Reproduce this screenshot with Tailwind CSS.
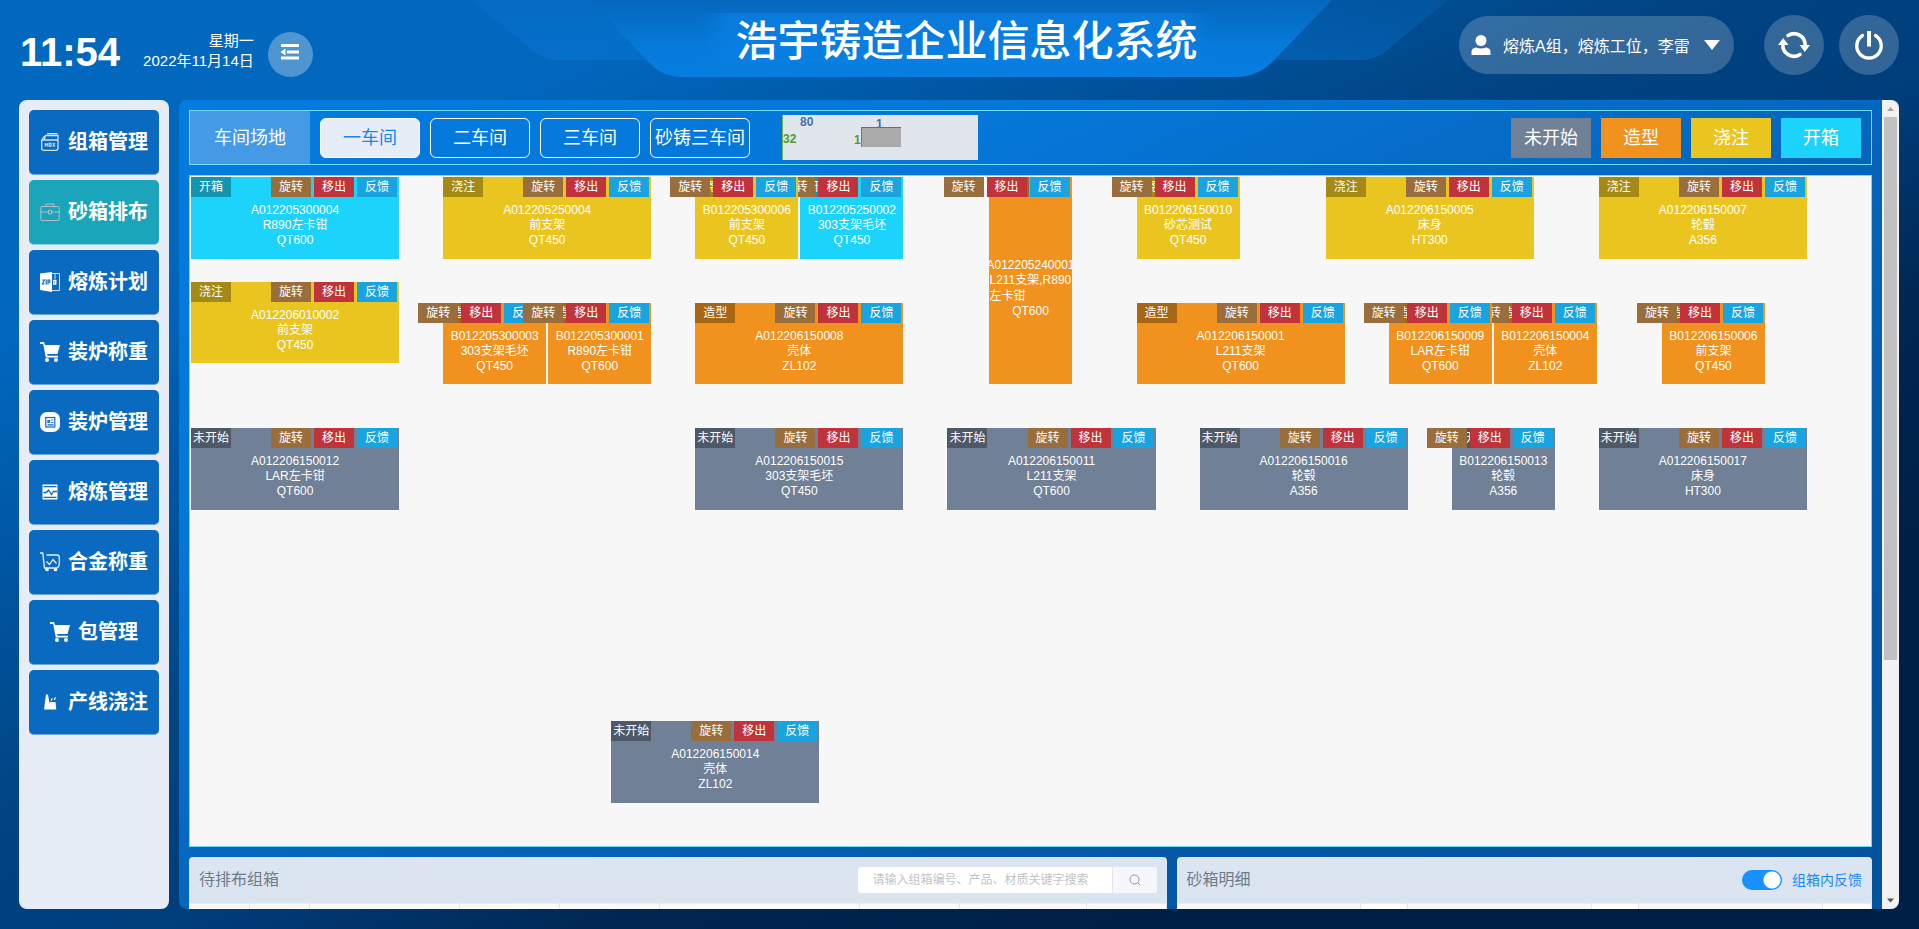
<!DOCTYPE html>
<html lang="zh-CN">
<head>
<meta charset="utf-8">
<title>浩宇铸造企业信息化系统</title>
<script src="https://cdn.jsdelivr.net/npm/@tailwindcss/browser@4"></script>
</head>
<body class="flex h-screen flex-col overflow-hidden bg-[linear-gradient(to_bottom_right,#0268be_0%,#0268be_18%,#0058a6_29%,#004483_44%,#003e7c_54%,#002652_66%,#001f46_80%,#001f46_100%)] font-['Liberation_Sans','Noto_Sans_CJK_SC',sans-serif] text-white">

<header class="relative flex h-[100px] shrink-0 items-start justify-between px-5">
  <!-- Title banner -->
  <svg class="absolute top-0 left-1/2 -translate-x-1/2" width="1000" height="80" viewBox="460 0 1000 80" aria-hidden="true">
    <defs>
      <linearGradient id="wing" x1="0" y1="0" x2="0" y2="1"><stop offset="0" stop-color="#0a7de0" stop-opacity=".15"/><stop offset="1" stop-color="#0a7de0" stop-opacity=".35"/></linearGradient>
      <linearGradient id="core" x1="0" y1="0" x2="0" y2="1"><stop offset="0" stop-color="#0567bd"/><stop offset=".6" stop-color="#067ada"/><stop offset="1" stop-color="#067ee2"/></linearGradient>
      <linearGradient id="glow" x1="0" y1="0" x2="1" y2="0"><stop offset="0" stop-color="#0a80e4" stop-opacity="0"/><stop offset=".06" stop-color="#0a80e4" stop-opacity=".7"/><stop offset=".94" stop-color="#0a80e4" stop-opacity=".7"/><stop offset="1" stop-color="#0a80e4" stop-opacity="0"/></linearGradient>
    </defs>
    <path fill="url(#wing)" d="M472 0 L528 46 Q541 60 560 60 H1360 Q1378 60 1392 46 L1448 0Z"/>
    <path fill="url(#core)" d="M590 0 L645 58 Q660 77 682 77 H1236 Q1260 77 1276 58 L1332 0Z"/>
    <rect x="700" y="13" width="512" height="50" fill="url(#glow)"/>
  </svg>
  <h1 class="absolute top-[10px] left-1/2 ml-[7px] -translate-x-1/2 text-[42px] leading-[64px] font-medium whitespace-nowrap">浩宇铸造企业信息化系统</h1>

  <div class="flex items-center pt-[30px]">
    <time class="pb-1 text-[40px] leading-[44px] font-bold">11:54</time>
    <div class="ml-[23px] pb-[6px] text-right text-[15px] leading-5 whitespace-nowrap"><div>星期一</div><div>2022年11月14日</div></div>
    <button type="button" aria-label="收起菜单" class="ml-[14px] flex size-[45px] items-center justify-center rounded-full bg-white/30">
      <svg class="mb-1 size-5" viewBox="0 0 20 20" fill="#fff"><path d="M1 2h18v3H1zM7 8.500h12v3H7zM1 14.500h18v3H1zM0.500 10l5-3.500v7z"/></svg>
    </button>
  </div>

  <div class="flex items-center pt-[15px]">
    <button type="button" class="mr-[30px] flex h-[58px] w-[275px] items-center rounded-full bg-white/20 pl-3 text-base">
      <svg class="mr-3 size-5" viewBox="0 0 20 20" fill="#fff"><circle cx="10" cy="5.500" r="5.500"/><path d="M0.500 20v-3q0-4 4.500-4.500 5 2 10 0 4.500.5 4.500 4.500v3z"/></svg>
      <span class="mt-1 whitespace-nowrap">熔炼A组，熔炼工位，李雷</span>
      <svg class="ml-[14px] h-[10px] w-4" viewBox="0 0 16 10" fill="#fff"><path d="M0 0h16L8 10z"/></svg>
    </button>
    <button type="button" aria-label="刷新" class="mr-[15px] flex size-[60px] items-center justify-center rounded-full bg-white/20">
      <svg class="size-8" viewBox="0 0 32 32" fill="none" stroke="#fff" stroke-width="3.600"><path stroke-linecap="round" d="M10 6.500A11.200 11.200 0 0 1 27.200 16"/><path stroke-linecap="round" d="M22 25.500A11.200 11.200 0 0 1 4.800 16"/><path d="M21.500 16H32l-5.200 7zM0 16h10.500L5.200 9z" fill="#fff" stroke="none"/></svg>
    </button>
    <button type="button" aria-label="退出" class="flex size-[60px] items-center justify-center rounded-full bg-white/20">
      <svg class="size-8" viewBox="0 0 32 32" fill="none" stroke="#fff" stroke-width="3.400"><path stroke-linecap="round" d="M9.500 6.500a12.200 12.200 0 1 0 13 0"/><path d="M16 2v15.500" stroke-width="4"/></svg>
    </button>
  </div>
</header>

<div class="flex min-h-0 flex-1 gap-[10px] px-5 pb-5">
  <nav class="-ml-px flex w-[150px] shrink-0 flex-col gap-[5px] rounded-lg bg-[#e6edf6] p-[10px] text-xl font-bold">
    <a href="#" class="flex h-[65px] items-center justify-center gap-2 rounded-[5px] border-b border-[#6ba6dc] bg-[#096abf]">
      <svg class="size-5" viewBox="0 0 20 20" fill="none" stroke="#cfe2f5" stroke-width="1.300"><path d="M1.700 8V16q0 2.300 2 2.300H16q2 0 2-2.300V8M1.700 8h16.300M4 8l1.500-4.500H18V8M7 1.700h10.500M1.700 8l2.800-4"/><path d="M5.300 11v3.500M7.300 11v3.500M5.300 12.700h2M9 11.300h2v3H9zM12.800 11l2 3.500M14.800 11l-2 3.500" stroke-width="1.100"/></svg>
      组箱管理</a>
    <a href="#" aria-current="page" class="flex h-[65px] items-center justify-center gap-2 rounded-[5px] border-b border-[#8cd0dc] bg-[#1ba5ba]">
      <svg class="size-5" viewBox="0 0 20 20" fill="none" stroke="#b4bec6" stroke-width="1"><rect x=".8" y="4.500" width="18.400" height="14" rx="1"/><path d="M6 4.500V2h8v2.500M1 10h7M12 10h7M8.500 8.500h3V12h-3z"/></svg>
      砂箱排布</a>
    <a href="#" class="flex h-[65px] items-center justify-center gap-2 rounded-[5px] border-b border-[#6ba6dc] bg-[#096abf]">
      <svg class="size-5" viewBox="0 0 20 20"><path fill="#fff" d="M0 1.500 12 0v20L0 18z"/><path fill="none" stroke="#cfe2f5" d="M12 1.500h7.500v17H12M15 2v5"/><path fill="none" stroke="#096abf" stroke-width="1.100" d="M2.300 8h2.200l-2.200 4h2.400M6.200 7.500v5M8 12.500V8h1.800v2.200H8"/><path fill="none" stroke="#fff" stroke-width="1.300" d="M13.800 8.500h2v3.500h-2z"/></svg>
      熔炼计划</a>
    <a href="#" class="flex h-[65px] items-center justify-center gap-2 rounded-[5px] border-b border-[#6ba6dc] bg-[#096abf]">
      <svg class="size-5" viewBox="0 0 20 20" fill="#fff"><path d="M0 0h4l1 3h15l-2.500 9H7.200l.3 1.700H18V15.500H5.800L3.200 2H0z"/><circle cx="7" cy="18" r="2"/><circle cx="16" cy="18" r="2"/></svg>
      装炉称重</a>
    <a href="#" class="flex h-[65px] items-center justify-center gap-2 rounded-[5px] border-b border-[#6ba6dc] bg-[#096abf]">
      <svg class="size-5" viewBox="0 0 20 20"><rect width="20" height="20" rx="7" fill="#fff"/><g fill="none" stroke="#096abf" stroke-width="1.200"><rect x="5.800" y="5.500" width="9" height="9.500"/><path d="M8 8.500h1.500v2H8zM11.200 8h2M11.200 10.500h2M7.500 12.800h6"/></g></svg>
      装炉管理</a>
    <a href="#" class="flex h-[65px] items-center justify-center gap-2 rounded-[5px] border-b border-[#6ba6dc] bg-[#096abf]">
      <svg class="size-5" viewBox="0 0 20 20"><path fill="#fff" d="M2.500 2.500h15v15h-15z"/><path fill="none" stroke="#096abf" stroke-width="1.300" d="M3.500 4.700h13M3.500 15.300h13M3.500 10.500h3l2-2.500 3 4.500 2-3h3.500"/></svg>
      熔炼管理</a>
    <a href="#" class="flex h-[65px] items-center justify-center gap-2 rounded-[5px] border-b border-[#6ba6dc] bg-[#096abf]">
      <svg class="size-5" viewBox="0 0 20 20" fill="none" stroke="#e6f0fa" stroke-width="1.300"><path d="M0 1h2.800l1.700 15H17q2.300-1 2.300-5V5.500Q19.300 3 17 3H6.500M6.500 9.500l3 3 3.500-5 3.500 4"/><circle cx="7" cy="17.500" r="1.200" fill="#fff"/><circle cx="15.500" cy="17.500" r="1.200" fill="#fff"/></svg>
      合金称重</a>
    <a href="#" class="flex h-[65px] items-center justify-center gap-2 rounded-[5px] border-b border-[#6ba6dc] bg-[#096abf]">
      <svg class="size-5" viewBox="0 0 20 20" fill="#fff"><path d="M0 0h4l1 3h15l-2.500 9H7.200l.3 1.700H18V15.500H5.800L3.200 2H0z"/><circle cx="7" cy="18" r="2"/><circle cx="16" cy="18" r="2"/></svg>
      包管理</a>
    <a href="#" class="flex h-[65px] items-center justify-center gap-2 rounded-[5px] border-b border-[#6ba6dc] bg-[#096abf]">
      <svg class="size-5" viewBox="0 0 20 20" fill="#fff"><path d="M4 17.500 6 2.500h2l1.500 9 .5-1.500h5.500l.8 7.500z"/><path d="M10.500 8.500l1-2 1.300-.5-.8 2.500zM13.500 8l1-2.300 1.700-.7-1.200 3z"/></svg>
      产线浇注</a>
  </nav>

  <main class="flex min-w-0 flex-1 overflow-hidden rounded-lg bg-[linear-gradient(to_bottom_right,#047bdf,#0577d9_25%,#0566bd_50%,#0458a6_75%,#04529b)]">
    <div class="flex min-w-0 flex-1 flex-col gap-[10px] p-[10px]">
      <section class="flex h-[55px] shrink-0 items-center border border-[#6cdcf7] text-lg">
        <h2 class="flex h-full w-[120px] items-center justify-center bg-[#459ae6]">车间场地</h2>
        <div class="flex gap-[10px] pl-[10px]">
          <button type="button" class="h-10 w-[100px] rounded-md border border-white bg-[#e6edf6] text-[#1686f0]">一车间</button>
          <button type="button" class="h-10 w-[100px] rounded-md border border-white">二车间</button>
          <button type="button" class="h-10 w-[100px] rounded-md border border-white">三车间</button>
          <button type="button" class="h-10 w-[100px] rounded-md border border-white whitespace-nowrap">砂铸三车间</button>
        </div>
        <!-- Floor scale diagram: 80 × 32 cells, one cell enlarged -->
        <div class="relative ml-8 h-[45px] w-[196px] border-l border-[#6bb04a] bg-[#e0e6ec] text-xs leading-3 font-bold text-[#4a6fa8]">
          <span class="absolute top-px left-[17px]">80</span>
          <span class="absolute top-[18px] left-0 text-[#4c9c2e]">32</span>
          <span class="absolute top-[3px] left-[93px]">1</span>
          <span class="absolute top-[19px] left-[71px] text-[#4c9c2e]">1</span>
          <span class="absolute top-3 left-[78px] h-5 w-10 border-t border-l border-t-[#4a6fc0] border-l-[#4c9c2e] bg-[#aaaaaa]"></span>
        </div>
        <div class="ml-auto flex gap-[10px] pr-[10px]">
          <button type="button" class="h-10 w-20 bg-[#708096]">未开始</button>
          <button type="button" class="h-10 w-20 bg-[#f0921d]">造型</button>
          <button type="button" class="h-10 w-20 bg-[#ebc51f]">浇注</button>
          <button type="button" class="h-10 w-20 bg-[#1cd4fb]">开箱</button>
        </div>
      </section>

      <section id="floor" aria-label="一车间场地" class="grid h-[672px] shrink-0 grid-cols-80 grid-rows-32 border border-[#6cdcf7] bg-[#f7f7f7]"></section>

      <div class="grid grid-cols-12 gap-[10px]">
        <section class="col-span-7 overflow-hidden rounded-t-sm bg-[#dbe5f1]">
          <div class="flex h-[46px] items-center justify-between px-[10px]">
            <h2 class="text-base text-[#707b89]">待排布组箱</h2>
            <form class="flex h-[26px] overflow-hidden rounded-[3px] text-xs">
              <input type="text" aria-label="搜索组箱" placeholder="请输入组箱编号、产品、材质关键字搜索" class="w-[254px] bg-white px-[15px] text-gray-700 outline-none placeholder:text-[#bfc3ca]">
              <button type="button" aria-label="搜索" class="flex w-[45px] items-center justify-center border-l border-[#e0e4ea] bg-[#f5f7fa]">
                <svg class="size-3" viewBox="0 0 12 12" fill="none" stroke="#8f949c" stroke-width="1"><circle cx="5.500" cy="5.500" r="4.500"/><path d="m8.800 8.800 2.400 2.400"/></svg>
              </button>
            </form>
          </div>
          <table class="w-full table-fixed bg-[#fafafa]">
            <colgroup><col class="w-[60px]"><col class="w-[60px]"><col class="w-[150px]"><col class="w-[100px]"><col class="w-[100px]"><col class="w-[200px]"><col class="w-[100px]"><col class="w-[127px]"><col></colgroup>
            <tr class="h-10 border-t border-[#ebeef5] *:border-r *:border-[#e2e6ec]"><td></td><td></td><td></td><td></td><td></td><td></td><td></td><td></td><td></td></tr>
          </table>
        </section>
        <section class="col-span-5 overflow-hidden rounded-t-sm bg-[#dbe5f1]">
          <div class="flex h-[46px] items-center justify-between px-[10px]">
            <h2 class="text-base text-[#707b89]">砂箱明细</h2>
            <label class="flex items-center gap-[10px] text-sm text-[#1989fa]">
              <input type="checkbox" role="switch" checked class="h-5 w-10 appearance-none rounded-full bg-[#bfc5ce] bg-[radial-gradient(circle_at_30px_10px,#fff_8px,transparent_9px)] checked:bg-[#1890ff]">
              组箱内反馈
            </label>
          </div>
          <table class="w-full table-fixed bg-white">
            <colgroup><col class="w-[184px]"><col class="w-[47px]"><col class="w-[184px]"><col class="w-[47px]"><col class="w-[184px]"><col></colgroup>
            <tr class="h-10 border-t border-[#ebeef5] *:border-r *:border-[#e2e6ec]"><td class="bg-[#f8f8f9]"></td><td></td><td class="bg-[#f8f8f9]"></td><td></td><td class="bg-[#f8f8f9]"></td><td></td></tr>
          </table>
        </section>
      </div>
    </div>

    <!-- Scroll bar -->
    <div class="flex w-[17px] shrink-0 flex-col items-center bg-[#f1f1f1]" aria-hidden="true">
      <svg class="size-[17px] shrink-0" viewBox="0 0 17 17" fill="#a3a3a3"><path d="M5 11h7L8.500 7z"/></svg>
      <div class="min-h-0 w-full flex-1 px-[2px]"><div class="h-[70%] bg-[#c1c1c1]"></div></div>
      <svg class="size-[17px] shrink-0" viewBox="0 0 17 17" fill="#505050"><path d="M5 6.500h7l-3.500 4z"/></svg>
    </div>
  </main>
</div>

<script>
  const states = {
    idle: ["未开始", "bg-[#708096]"],
    mold: ["造型", "bg-[#f0921d]"],
    pour: ["浇注", "bg-[#ebc51f]"],
    open: ["开箱", "bg-[#1cd4fb]"],
  };
  const A = "col-span-10 row-span-4", B = "col-span-5 row-span-4", T = "col-span-4 row-span-10";
  const boxes = [
    ["open", "col-start-1 row-start-1", A, "A012205300004", "R890左卡钳", "QT600"],
    ["pour", "col-start-13 row-start-1", A, "A012205250004", "前支架", "QT450"],
    ["open", "col-start-30 row-start-1", B, "B012205250002", "303支架毛坯", "QT450"],
    ["pour", "col-start-25 row-start-1", B, "B012205300006", "前支架", "QT450"],
    ["mold", "col-start-39 row-start-1", T, "A012205240001", "L211支架,R890左卡钳", "QT600"],
    ["pour", "col-start-46 row-start-1", B, "B012206150010", "砂芯测试", "QT450"],
    ["pour", "col-start-55 row-start-1", A, "A012206150005", "床身", "HT300"],
    ["pour", "col-start-68 row-start-1", A, "A012206150007", "轮毂", "A356"],
    ["pour", "col-start-1 row-start-6", A, "A012206010002", "前支架", "QT450"],
    ["mold", "col-start-13 row-start-7", B, "B012205300003", "303支架毛坯", "QT450"],
    ["mold", "col-start-18 row-start-7", B, "B012205300001", "R890左卡钳", "QT600"],
    ["mold", "col-start-25 row-start-7", A, "A012206150008", "壳体", "ZL102"],
    ["mold", "col-start-46 row-start-7", A, "A012206150001", "L211支架", "QT600"],
    ["mold", "col-start-63 row-start-7", B, "B012206150004", "壳体", "ZL102"],
    ["mold", "col-start-58 row-start-7", B, "B012206150009", "LAR左卡钳", "QT600"],
    ["mold", "col-start-71 row-start-7", B, "B012206150006", "前支架", "QT450"],
    ["idle", "col-start-1 row-start-13", A, "A012206150012", "LAR左卡钳", "QT600"],
    ["idle", "col-start-25 row-start-13", A, "A012206150015", "303支架毛坯", "QT450"],
    ["idle", "col-start-37 row-start-13", A, "A012206150011", "L211支架", "QT600"],
    ["idle", "col-start-49 row-start-13", A, "A012206150016", "轮毂", "A356"],
    ["idle", "col-start-61 row-start-13", B, "B012206150013", "轮毂", "A356"],
    ["idle", "col-start-68 row-start-13", A, "A012206150017", "床身", "HT300"],
    ["idle", "col-start-21 row-start-27", A, "A012206150014", "壳体", "ZL102"],
  ];
  document.getElementById("floor").innerHTML = boxes.map(([s, place, span, no, name, mat]) => `
    <article class="relative m-px text-xs ${states[s][1]} ${place} ${span}">
      <div class="flex h-full flex-col items-center justify-center overflow-hidden pt-[14px] leading-[14px]">
        <span class="whitespace-nowrap">${no}</span>
        <span class="max-w-full leading-4 break-words">${name}</span>
        <span>${mat}</span>
      </div>
      <span class="absolute top-0 left-0 h-5 w-10 bg-black/30 text-center leading-5 whitespace-nowrap">${states[s][0]}</span>
      <div class="absolute top-0 right-[2px] flex gap-[3px] leading-5">
        <button type="button" class="h-5 w-10 bg-[#9a6d3c]">旋转</button>
        <button type="button" class="h-5 w-10 bg-[#c1333b]">移出</button>
        <button type="button" class="h-5 w-10 bg-[#1aa4df]">反馈</button>
      </div>
    </article>`).join("");
</script>
</body>
</html>
